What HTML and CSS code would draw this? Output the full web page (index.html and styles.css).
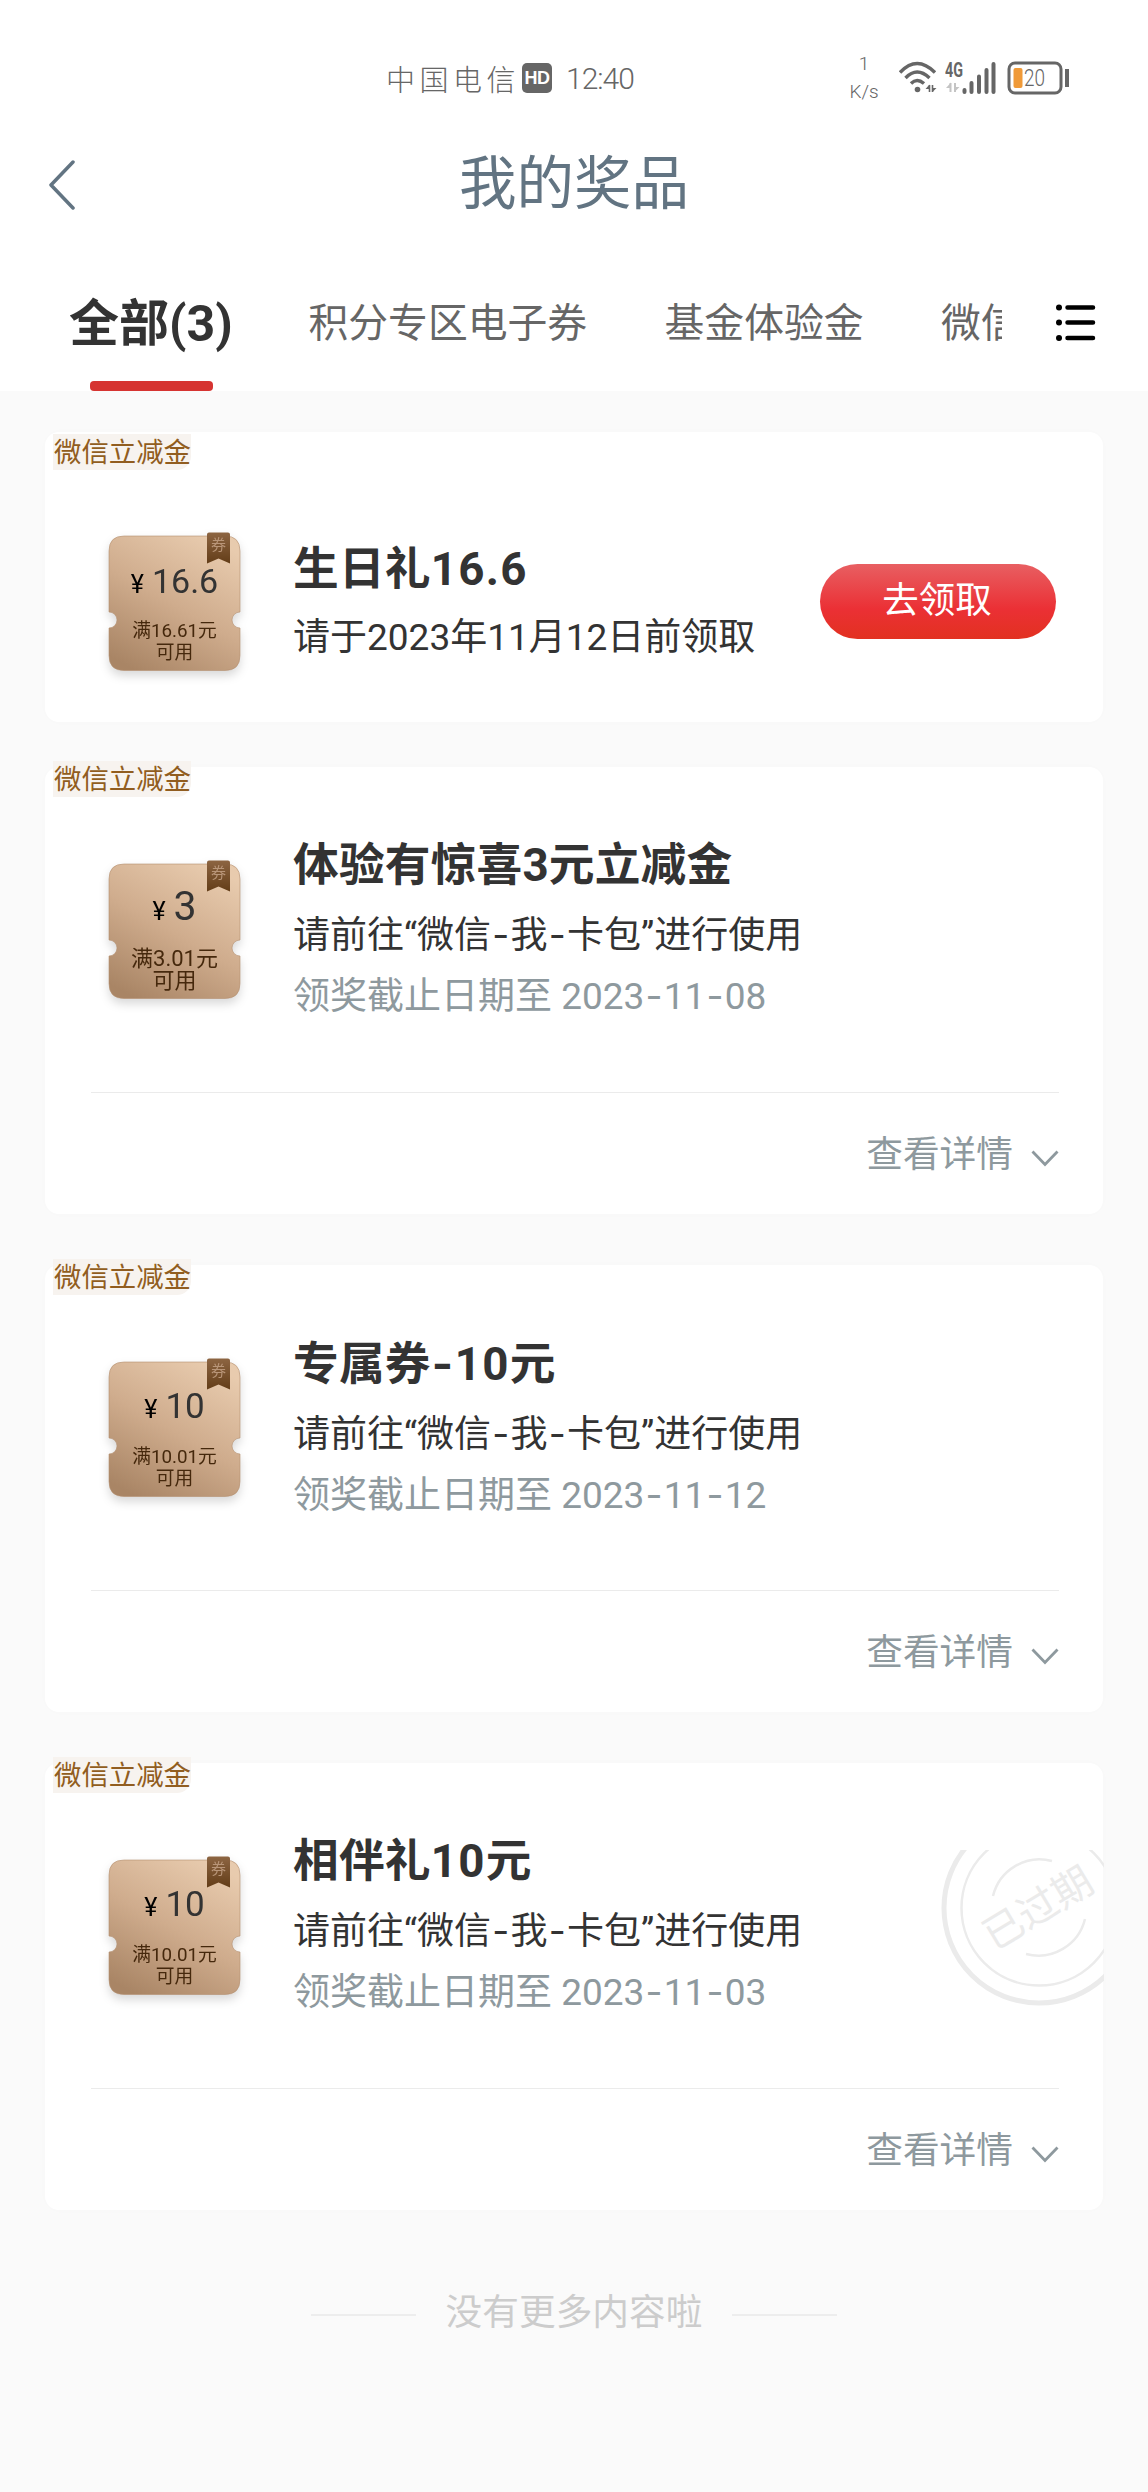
FILE: index.html
```html
<!DOCTYPE html>
<html lang="zh-CN">
<head>
<meta charset="utf-8">
<title>我的奖品</title>
<link rel="stylesheet" href="styles.css">
</head>
<body>
<svg width="0" height="0" class="defs" aria-hidden="true">
  <defs>
    <linearGradient id="gold" x1="0.75" y1="0" x2="0.2" y2="1">
      <stop offset="0" stop-color="#e8cbae"/>
      <stop offset="0.5" stop-color="#cfac8d"/>
      <stop offset="1" stop-color="#a98565"/>
    </linearGradient>
    <linearGradient id="brown" x1="0" y1="0" x2="0" y2="1">
      <stop offset="0" stop-color="#8d6542"/>
      <stop offset="1" stop-color="#633d18"/>
    </linearGradient>
    <symbol id="ticket" viewBox="0 0 133 138">
      <path d="M16 3.500H117Q132 3.500 132 18.500V79.500A8 8 0 0 0 132 95.500V123Q132 138 117 138H16Q1 138 1 123V95.500A8 8 0 0 0 1 79.500V18.500Q1 3.500 16 3.500Z" fill="url(#gold)" stroke="#b4906f" stroke-opacity=".6"/>
      <path d="M99 2Q99 0 101 0H120Q122 0 122 2V31L110.500 26L99 31Z" fill="url(#brown)"/>
    </symbol>
    <symbol id="chevron" viewBox="0 0 28 18">
      <path d="M1.500 1.500L14 14.500L26.500 1.500" fill="none" stroke="#8e999e" stroke-width="2.800"/>
    </symbol>
  </defs>
</svg>

<header class="top">
  <div class="status">
    <span class="carrier">中国电信</span>
    <span class="hd">HD</span>
    <span class="clock">12:40</span>
    <span class="speed"><span>1</span><span>K/s</span></span>
    <svg class="wifi" width="38" height="34" viewBox="0 0 38 34" fill="none" stroke="#666" stroke-width="3.400">
      <path d="M1 11.500Q18 -6.500 36 11.500"/>
      <path d="M6.500 17Q18 5 30.500 17"/>
      <path d="M12 22.500Q18 16.500 25 22.500"/>
      <circle cx="18.500" cy="28.500" r="2.800" fill="#666" stroke="none"/>
      <path d="M30.500 31V23.500L26.500 28H30.500M33.500 24V31L37.500 27H33.500" fill="#666" stroke="none"/>
      <path d="M30.500 31V24M33.500 24V31" stroke-width="1.600"/>
    </svg>
    <svg class="signal" width="52" height="34" viewBox="0 0 52 34">
      <text x="0" y="15.500" class="net" textLength="18" lengthAdjust="spacingAndGlyphs">4G</text>
      <path d="M6 31V21.500L1 27H6M9.500 21.500V31L14.500 26H9.500" fill="#c4c4c4"/>
      <path d="M5.500 31V22M10 22V31" stroke="#c4c4c4" stroke-width="2"/>
      <path d="M19.500 31V29M26.500 31V22M34 31V15.500M41.500 31V9M48.500 31V3" stroke="#666" stroke-width="4" stroke-linecap="round"/>
    </svg>
    <svg class="battery" width="64" height="34" viewBox="0 0 64 34">
      <rect x="2" y="2" width="52" height="30" rx="6" fill="none" stroke="#666" stroke-width="3"/>
      <rect x="6.500" y="7" width="9" height="20" rx="2" fill="#f09a38"/>
      <rect x="58" y="8" width="4" height="18" fill="#666"/>
      <text x="17" y="25" class="pct" textLength="21" lengthAdjust="spacingAndGlyphs">20</text>
    </svg>
  </div>
  <div class="titlebar">
    <svg class="back" width="28" height="50" viewBox="0 0 28 50"><path d="M25 2L3 25L25 48" fill="none" stroke="#627482" stroke-width="3.500" stroke-linecap="round" stroke-linejoin="round"/></svg>
    <h1>我的奖品</h1>
  </div>
  <nav class="tabs">
    <div class="tab-list">
      <span class="tab active">全部(3)</span>
      <span class="tab">积分专区电子券</span>
      <span class="tab">基金体验金</span>
      <span class="tab">微信</span>
    </div>
    <svg class="menu" width="42" height="38" viewBox="0 0 42 38" stroke="#000" stroke-width="4.500" stroke-linecap="round">
      <path d="M12.500 3.500H38M12.500 18.500H38M12.500 34H38"/>
      <path d="M4 3.500h.01M4 18.500h.01M4 34h.01" stroke-width="6"/>
    </svg>
  </nav>
</header>

<main class="list">
  <article class="card claim">
    <span class="tag">微信立减金</span>
    <div class="body">
      <div class="coupon">
        <svg class="ticket" width="133" height="139"><use href="#ticket"/></svg><span class="mark">券</span>
        <div class="price"><i>¥</i>16.6</div>
        <div class="cond">满16.61元<br>可用</div>
      </div>
      <div class="info">
        <h2>生日礼<span class="num">16.6</span></h2>
        <p>请于2023年11月12日前领取</p>
      </div>
      <button class="get">去领取</button>
    </div>
  </article>

  <article class="card">
    <span class="tag">微信立减金</span>
    <div class="body">
      <div class="coupon large">
        <svg class="ticket" width="133" height="139"><use href="#ticket"/></svg><span class="mark">券</span>
        <div class="price"><i>¥</i>3</div>
        <div class="cond">满3.01元<br>可用</div>
      </div>
      <div class="info">
        <h2>体验有惊喜3元立减金</h2>
        <p>请前往“微信<b>-</b>我<b>-</b>卡包”进行使用</p>
        <p class="date">领奖截止日期至 2023<b>-</b>11<b>-</b>08</p>
      </div>
    </div>
    <div class="more"><span>查看详情</span><svg width="28" height="18"><use href="#chevron"/></svg></div>
  </article>

  <article class="card">
    <span class="tag">微信立减金</span>
    <div class="body">
      <div class="coupon ten">
        <svg class="ticket" width="133" height="139"><use href="#ticket"/></svg><span class="mark">券</span>
        <div class="price"><i>¥</i>10</div>
        <div class="cond">满10.01元<br>可用</div>
      </div>
      <div class="info">
        <h2>专属券<b>-</b><span class="num">10</span>元</h2>
        <p>请前往“微信<b>-</b>我<b>-</b>卡包”进行使用</p>
        <p class="date">领奖截止日期至 2023<b>-</b>11<b>-</b>12</p>
      </div>
    </div>
    <div class="more"><span>查看详情</span><svg width="28" height="18"><use href="#chevron"/></svg></div>
  </article>

  <article class="card">
    <span class="tag">微信立减金</span>
    <svg class="stamp" width="167" height="158" viewBox="0 0 167 158" fill="none" stroke="#ebebeb">
      <circle cx="102" cy="58" r="95" stroke-width="5"/>
      <circle cx="102" cy="58" r="77.500" stroke-width="2.500"/>
      <path d="M56 46A48 48 0 0 1 115 11M148 69A48 48 0 0 1 89 104" stroke-width="2.500"/>
      <text x="101" y="72" text-anchor="middle" transform="rotate(-31 101 58)">已过期</text>
    </svg>
    <div class="body">
      <div class="coupon ten">
        <svg class="ticket" width="133" height="139"><use href="#ticket"/></svg><span class="mark">券</span>
        <div class="price"><i>¥</i>10</div>
        <div class="cond">满10.01元<br>可用</div>
      </div>
      <div class="info">
        <h2>相伴礼<span class="num">10</span>元</h2>
        <p>请前往“微信<b>-</b>我<b>-</b>卡包”进行使用</p>
        <p class="date">领奖截止日期至 2023<b>-</b>11<b>-</b>03</p>
      </div>
    </div>
    <div class="more"><span>查看详情</span><svg width="28" height="18"><use href="#chevron"/></svg></div>
  </article>
</main>
<footer class="end">没有更多内容啦</footer>
</body>
</html>
```
FILE: styles.css
```css
* { box-sizing: border-box; margin: 0; padding: 0; }

body {
  min-height: 2492px;
  background: #fafafa;
  color: #333;
  font-family: Roboto, "Noto Sans CJK SC", sans-serif;
}

.defs { position: absolute; }

.top { height: 391px; background: #fff; }

/* status bar */
.status {
  display: flex;
  align-items: center;
  height: 130px;
  padding: 26px 74px 0 386px;
  color: #666;
  white-space: nowrap;
}
.carrier { width: 136px; font-size: 29px; font-weight: 300; letter-spacing: 4.500px; }
.hd {
  width: 30px;
  height: 30px;
  border-radius: 5px;
  background: #666;
  color: #fff;
  font: bold 18px/30px "Liberation Sans", sans-serif;
  letter-spacing: -.5px;
  text-align: center;
}
.clock { width: 68px; margin-left: 14px; font-size: 30px; font-weight: 300; letter-spacing: -1px; }
.speed {
  display: flex;
  flex-direction: column;
  width: 40px;
  margin: 0 15px 0 210px;
  font-size: 19px;
  font-weight: 300;
  line-height: 28px;
  text-align: center;
}
.signal { margin-left: 8px; }
.battery { margin-left: 10px; }
.net { fill: #666; font: 700 20px Roboto, sans-serif; }
.pct { fill: #666; font: 300 23px Roboto, sans-serif; }

/* title bar */
.titlebar { display: flex; height: 110px; padding: 30px 48px 0; }
.titlebar h1 {
  flex: 1;
  margin-right: 28px;
  color: #627482;
  font-size: 57.500px;
  font-weight: 400;
  line-height: 50px;
  text-align: center;
}

/* category tabs */
.tabs { display: flex; justify-content: space-between; height: 151px; padding: 0 51px 0 69px; }
.tab-list { display: flex; gap: 77.500px; width: 933px; overflow: hidden; white-space: nowrap; }
.tab { flex: none; color: #666; font-size: 39.800px; line-height: 168px; }
.tab.active {
  width: 162px;
  height: 151px;
  color: #333;
  font-size: 50px;
  font-weight: 700;
}
.tab.active::after {
  content: "";
  display: block;
  width: 123px;
  height: 10px;
  margin: -27px 0 0 21px;
  border-radius: 4px;
  background: #d63431;
}
.menu { margin-top: 64px; }

/* prize cards */
.list {
  display: flex;
  flex-direction: column;
  gap: 51.500px;
  padding: 41px 45px 0 45px;
}
.card {
  position: relative;
  height: 446.500px;
  border-radius: 14px;
  background: #fff;
  box-shadow: 0 0 16px rgba(0, 0, 0, .012);
}
.card.claim { height: 290px; margin-bottom: -6.500px; }
.tag {
  position: absolute;
  top: -6px;
  left: 8px;
  width: 138px;
  height: 36px;
  padding-left: 1px;
  border-bottom-right-radius: 14px;
  background: #f7f3ef;
  color: #915d20;
  font-size: 27.400px;
  line-height: 38px;
  white-space: nowrap;
}
.claim .tag { top: 2px; }
.body { display: flex; height: 325px; padding: 93px 47px 0 63px; }
.claim .body { height: 290px; padding-top: 100px; }
.info { margin-left: 52px; white-space: nowrap; }
.info h2 { margin-top: -24px; font-size: 45.700px; font-weight: 700; line-height: 60px; letter-spacing: .2px; }
.num { letter-spacing: 1.300px; }
.claim h2 { margin-top: 8px; }
.info p { margin-top: 9px; font-size: 37px; line-height: 60px; }
.claim p { margin-top: 8px; }
.info .date { margin-top: 0; color: #8e999e; }
.info b { padding: 0 1.200px; font-family: Inter, sans-serif; font-weight: inherit; }

/* coupon ticket */
.coupon { position: relative; width: 133px; height: 139px; flex: none; text-align: center; filter: drop-shadow(0 5px 5px rgba(0, 0, 0, .15)); }
.ticket { position: absolute; inset: 0; }
.mark { position: absolute; top: 2px; left: 99px; width: 23px; color: #b89578; font-size: 15px; line-height: 22px; }
.price {
  position: relative;
  display: flex;
  align-items: baseline;
  justify-content: center;
  height: 88px;
  gap: 8px;
  color: #333;
  font-size: 34px;
  line-height: 98px;
}
.price i { color: #000; font-size: 25px; font-style: normal; }
.cond { position: relative; color: #45280c; font-size: 18.800px; line-height: 22px; white-space: nowrap; }
.ten .price { font-size: 35px; }
.large .price { font-size: 41px; line-height: 92px; }
.large .cond { font-size: 22px; }

.get {
  width: 236px;
  height: 75px;
  margin: 32px 0 0 auto;
  border: 0;
  border-radius: 38px;
  background: linear-gradient(#e85f62, #eb3035 60%, #e23120);
  color: #fff;
  font: 36.500px/70px Roboto, "Noto Sans CJK SC", sans-serif;
  padding: 0 2px 2px 0;
}

.more {
  display: flex;
  align-items: center;
  justify-content: flex-end;
  gap: 18px;
  height: 121px;
  margin: 0 44px 0 46px;
  border-top: 1px solid #ebebeb;
  color: #8e999e;
  font-size: 36.700px;
}
.more span { margin-top: -4px; }
.more svg { margin-top: 12px; }

.stamp { position: absolute; top: 87px; right: -1px; }
.stamp text { fill: #ebebeb; stroke: none; font-size: 40px; }

.end {
  display: flex;
  align-items: center;
  justify-content: center;
  gap: 30px;
  margin-top: 73px;
  color: #ccc;
  font-size: 36.700px;
  line-height: 60px;
}
.end::before, .end::after { content: ""; width: 105px; height: 2px; margin-top: 4px; background: #ededed; }
```
